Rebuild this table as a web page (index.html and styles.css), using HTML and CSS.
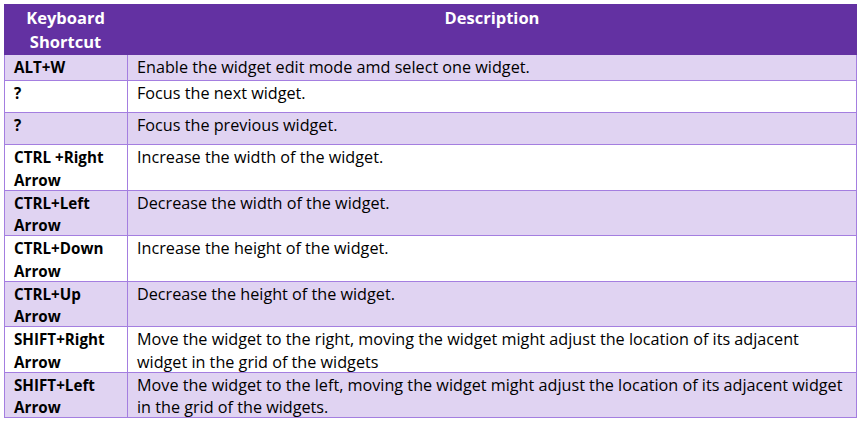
FILE: index.html
```html
<!DOCTYPE html>
<html>
<head>
<meta charset="utf-8">
<link rel="stylesheet" href="styles.css">
</head>
<body>
<div class="table">
  <div class="thead">
    <div class="th">Keyboard<br>Shortcut</div>
    <div class="th">Description</div>
  </div>
  <div class="tbody">
    <div class="cell key alt h25">ALT+W</div><div class="cell alt h25">Enable the widget edit mode amd select one widget.</div>
    <div class="cell key h31">?</div><div class="cell h31">Focus the next widget.</div>
    <div class="cell key alt h31">?</div><div class="cell alt h31">Focus the previous widget.</div>
    <div class="cell key two">CTRL +Right<br>Arrow</div><div class="cell two">Increase the width of the widget.</div>
    <div class="cell key alt two">CTRL+Left<br>Arrow</div><div class="cell alt two">Decrease the width of the widget.</div>
    <div class="cell key two">CTRL+Down<br>Arrow</div><div class="cell two">Increase the height of the widget.</div>
    <div class="cell key alt two">CTRL+Up<br>Arrow</div><div class="cell alt two">Decrease the height of the widget.</div>
    <div class="cell key two">SHIFT+Right<br>Arrow</div><div class="cell two">Move the widget to the right, moving the widget might adjust the location of its adjacent<br>widget in the grid of the widgets</div>
    <div class="cell key alt two">SHIFT+Left<br>Arrow</div><div class="cell alt two">Move the widget to the left, moving the widget might adjust the location of its adjacent widget<br>in the grid of the widgets.</div>
  </div>
</div>
</body>
</html>
```
FILE: styles.css
```css
*, *::before, *::after { box-sizing: border-box; }
html, body { margin: 0; padding: 0; background: #ffffff; }
body { padding: 4px 0 0 4px; font-family: "Open Sans", "Liberation Sans", sans-serif; color: #000; }
.table { width: 853px; }
.thead {
  display: grid;
  grid-template-columns: 123px 730px;
  height: 51px;
  background: #6331a2;
  color: #ffffff;
}
.th {
  text-align: center;
  font-weight: 700;
  font-size: 16.5px;
  line-height: 24px;
  padding-top: 2px;
}
.tbody {
  display: grid;
  grid-template-columns: 122px 728px;
  gap: 1px;
  padding: 0 1px 1px 1px;
  background: #a47ee0;
}
.cell {
  background: #ffffff;
  padding: 0 9px;
  font-size: 16.2px;
  line-height: 22.5px;
  white-space: nowrap;
}
.cell.alt { background: #e0d3f2; }
.key { font-weight: 700; font-size: 15.2px; }
.h25 { height: 25px; padding-top: 0.5px; }
.h31 { height: 31px; padding-top: 0.5px; }
.two { height: 44.5px; padding-top: 1px; }
```
